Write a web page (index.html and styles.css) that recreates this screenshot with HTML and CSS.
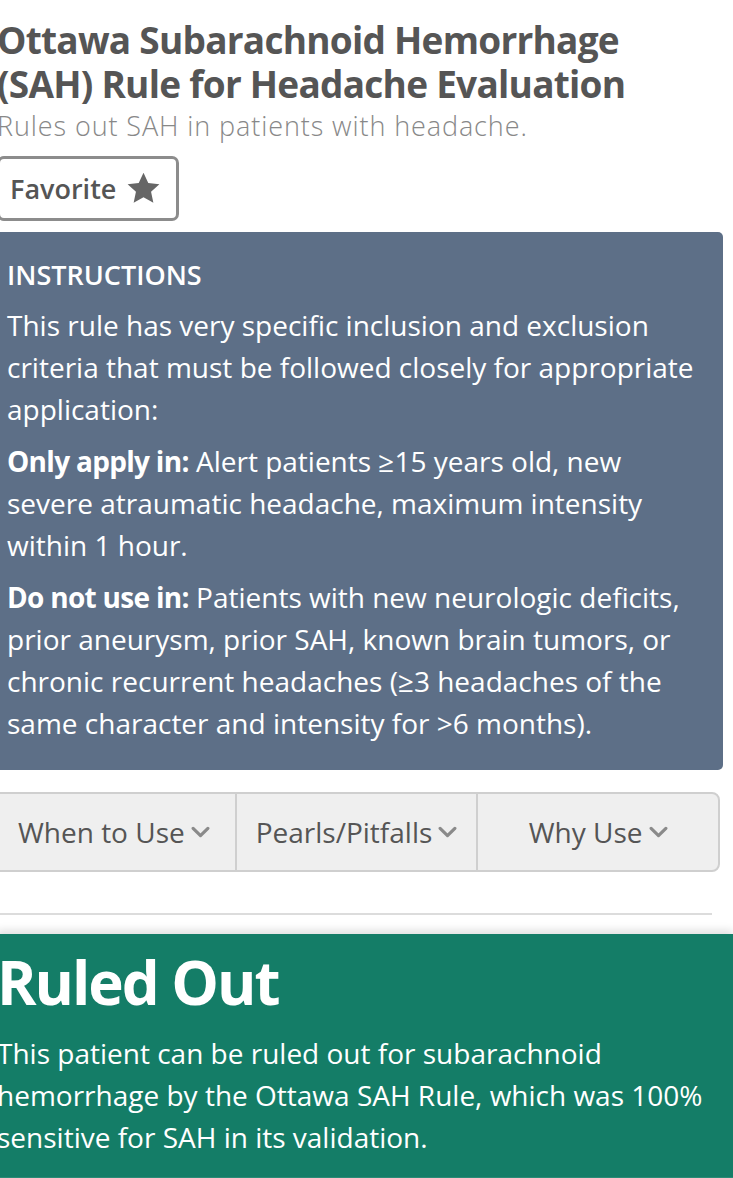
FILE: index.html
```html
<!DOCTYPE html>
<html>
<head>
<meta charset="utf-8">
<title>Ottawa SAH Rule</title>
<link rel="stylesheet" href="styles.css">
</head>
<body>
<div class="page">
  <header class="calc-header">
    <h1 class="calc-title">Ottawa Subarachnoid Hemorrhage (SAH) Rule for Headache Evaluation</h1>
    <p class="calc-desc">Rules out SAH in patients with headache.</p>
    <button class="fav-btn">Favorite
      <svg class="star" viewBox="0 0 24 24" width="37" height="37"><path d="M12 1.8l3.1 6.6 7.2.8-5.4 4.9 1.5 7.1L12 17.6l-6.4 3.6 1.5-7.1-5.4-4.9 7.2-.8z"/></svg>
    </button>
  </header>

  <section class="instructions">
    <h2 class="instr-head">INSTRUCTIONS</h2>
    <p>This rule has very specific inclusion and exclusion criteria that must be followed closely for appropriate application:</p>
    <p><b>Only apply in:</b> Alert patients ≥15 years old, new severe atraumatic headache, maximum intensity within 1 hour.</p>
    <p><b>Do not use in:</b> Patients with new neurologic deficits, prior aneurysm, prior SAH, known brain tumors, or chronic recurrent headaches (≥3 headaches of the same character and intensity for &gt;6 months).</p>
  </section>

  <nav class="tabs">
    <div class="tab">When to Use <svg class="chev" viewBox="0 0 18 11" width="19" height="12"><path d="M2 2l7 7 7-7"/></svg></div>
    <div class="tab">Pearls/Pitfalls <svg class="chev" viewBox="0 0 18 11" width="19" height="12"><path d="M2 2l7 7 7-7"/></svg></div>
    <div class="tab">Why Use <svg class="chev" viewBox="0 0 18 11" width="19" height="12"><path d="M2 2l7 7 7-7"/></svg></div>
  </nav>

  <hr class="divider">
</div>

<section class="result">
  <h2 class="result-title">Ruled Out</h2>
  <p class="result-text">This patient can be ruled out for subarachnoid hemorrhage by the Ottawa SAH Rule, which was 100% sensitive for SAH in its validation.</p>
</section>
</body>
</html>
```
FILE: styles.css
```css
html, body {
  margin: 0;
  padding: 0;
  background: #fff;
  overflow: hidden;
}
body {
  font-family: "Open Sans", "Noto Sans", sans-serif;
  color: #555;
  width: 733px;
  height: 1178px;
}
.page {
  margin-left: -3px;
  width: 726px;
}
.calc-header {
  padding-top: 18px;
}
.calc-title {
  margin: 0;
  padding-right: 40px;
  font-size: 37px;
  line-height: 44px;
  font-weight: 700;
  color: #555;
  letter-spacing: -0.75px;
}
.calc-desc {
  margin: 4px 0 0;
  font-size: 27px;
  line-height: 32px;
  color: #888;
  font-weight: 300;
  letter-spacing: 0.9px;
}
.fav-btn {
  margin-top: 14px;
  display: inline-flex;
  align-items: center;
  gap: 9px;
  height: 65px;
  padding: 0 14px 0 10px;
  border: 3px solid #8c8c8c;
  border-radius: 7px;
  background: #fff;
  font-family: inherit;
  font-size: 27px;
  font-weight: 600;
  color: #555;
}
.star { fill: #666; }

.instructions {
  margin-top: 11px;
  background: #5d6f87;
  color: #fff;
  border-radius: 0 5px 5px 0;
  padding: 22px 18px 26px 10px;
  font-size: 28px;
  line-height: 42px;
}
.instr-head {
  margin: 0 0 8px;
  font-size: 27px;
  line-height: 42px;
  font-weight: 600;
}
.instructions p {
  margin: 0 0 10px;
}
.instructions p:last-child { margin-bottom: 0; }
.instructions b { font-weight: 700; letter-spacing: -0.7px; }

.tabs {
  margin-top: 22px;
  display: grid;
  grid-template-columns: repeat(3, 1fr);
  height: 80px;
  margin-left: -6px;
  width: 729px;
  box-sizing: border-box;
  border: 2px solid #cfcfcf;
  border-radius: 8px;
  background: #efefef;
}
.tab {
  display: flex;
  align-items: center;
  justify-content: center;
  gap: 6px;
  font-size: 28px;
  color: #555;
}
.tab + .tab { border-left: 2px solid #cfcfcf; }
.chev { fill: none; stroke: #8a8a8a; stroke-width: 3; stroke-linecap: round; stroke-linejoin: round; }

.divider {
  margin: 41px 11px 0 3px;
  border: 0;
  height: 2px;
  background: #dcdcdc;
}

.result {
  margin-top: 19px;
  background: #147d67;
  color: #fff;
  padding: 8px 20px 0 0;
  margin-left: -3px;
  height: 245px;
  box-sizing: border-box;
  border-bottom: 2px solid #2b8a76;
  box-shadow: 0 -4px 8px rgba(0,0,0,0.12);
}
.result-title {
  margin: 0;
  font-size: 60px;
  line-height: 80px;
  font-weight: 700;
  letter-spacing: -2px;
}
.result-text {
  margin: 10px 0 0;
  font-size: 28px;
  line-height: 42px;
}
```
